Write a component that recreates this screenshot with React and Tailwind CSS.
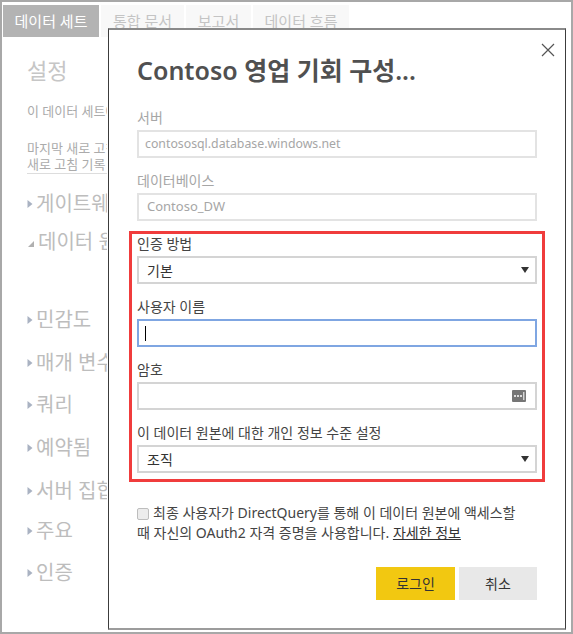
import React from "react";

function Tri() {
  return (
    <svg width="6" height="10" viewBox="0 0 6 10" className="mr-[3px] shrink-0">
      <polygon points="0.5,1 5.5,5 0.5,9" fill="#a9b2c2" />
    </svg>
  );
}

function TriDown() {
  return (
    <svg width="8" height="8" viewBox="0 0 8 8" className="mr-[3px] shrink-0 mt-[4px]">
      <polygon points="7,1 7,7 1,7" fill="#b0b0b0" />
    </svg>
  );
}

function NavItem({ children, mt, open }) {
  return (
    <div className={`flex items-center whitespace-nowrap text-[20px] leading-[24px] text-[#bdbdbd] ${mt}`}>
      {open ? <TriDown /> : <Tri />}
      <span>{children}</span>
    </div>
  );
}

function Caret() {
  return (
    <svg width="8" height="6" viewBox="0 0 8 6" className="shrink-0">
      <polygon points="0,0 8,0 4,6" fill="#333" />
    </svg>
  );
}

export default function App() {
  return (
    <div className="relative w-[573px] h-[634px] overflow-hidden border-2 border-[#a8a8a8] bg-white font-['Noto_Sans','Noto_Sans_CJK_KR',sans-serif]">
      {/* Tabs */}
      <div className="flex gap-[2px] pl-[1px] pt-[3px]">
        <div className="w-[96px] h-[32px] flex items-center justify-center bg-[#b3b3b3] text-white text-[15px]">데이터 세트</div>
        <div className="w-[83px] h-[32px] flex items-center justify-center bg-[#f8f8f8] text-[#c4c4c4] text-[15px]">통합 문서</div>
        <div className="w-[65px] h-[32px] flex items-center justify-center bg-[#f8f8f8] text-[#c4c4c4] text-[15px]">보고서</div>
        <div className="w-[96px] h-[32px] flex items-center justify-center bg-[#f8f8f8] text-[#c4c4c4] text-[15px]">데이터 흐름</div>
      </div>

      {/* Left settings panel (behind dialog) */}
      <div className="w-[105px] overflow-hidden pl-[25px] flex flex-col">
        <div className="mt-[18px] text-[22px] leading-[30px] text-[#c6c6c6]">설정</div>
        <div className="mt-[17px] text-[13px] leading-[18px] text-[#ababab] whitespace-nowrap">이 데이터 세트에 대한 설정</div>
        <div className="mt-[20px] w-[120px] text-[13px] leading-[16px] text-[#ababab] whitespace-nowrap border-b border-[#dddddd] pb-[1px]">
          <div>마지막 새로 고침 성공</div>
          <div>새로 고침 기록</div>
        </div>
        <NavItem mt="mt-[18px]">게이트웨이 연결</NavItem>
        <NavItem mt="mt-[14px]" open>데이터 원본 자격 증명</NavItem>
        <NavItem mt="mt-[54px]">민감도</NavItem>
        <NavItem mt="mt-[19px]">매개 변수</NavItem>
        <NavItem mt="mt-[18px]">쿼리</NavItem>
        <NavItem mt="mt-[19px]">예약됨</NavItem>
        <NavItem mt="mt-[19px]">서버 집합</NavItem>
        <NavItem mt="mt-[16px]">주요</NavItem>
        <NavItem mt="mt-[18px]">인증</NavItem>
      </div>

      {/* Dialog */}
      <div className="absolute left-[106px] top-[26px] w-[458px] h-[602px] bg-white border-l border-r border-[#3c3c3c] border-t-2 border-t-[#8a8a8a] border-b-2 border-b-[#9c9c9c] px-[28px] pt-[25px]">
        <button className="absolute right-[10px] top-[13px]">
          <svg width="14" height="14" viewBox="0 0 14 14">
            <path d="M1 1 L13 13 M13 1 L1 13" stroke="#555" strokeWidth="1.2" fill="none" />
          </svg>
        </button>

        <div className="text-[25px] leading-[30px] font-semibold text-[#505050] whitespace-nowrap">Contoso 영업 기회 구성...</div>

        <div className="mt-[23px] text-[14px] leading-[20px] text-[#a6a6a6]">서버</div>
        <div className="mt-[2px] h-[28px] border-2 border-[#e3e3e3] px-[6px] flex items-center text-[12.3px] text-[#a6a6a6]">contososql.database.windows.net</div>

        <div className="mt-[13px] text-[14px] leading-[20px] text-[#a6a6a6]">데이터베이스</div>
        <div className="mt-[2px] h-[28px] border-2 border-[#e3e3e3] px-[8px] flex items-center text-[13px] text-[#a6a6a6]">Contoso_DW</div>

        <div className="mt-[10px] mx-[-8px] border-[3px] border-[#f03c3c] px-[5px] pb-[6px]">
          <div className="text-[14px] leading-[20px] text-[#444]">인증 방법</div>
          <div className="mt-[2px] h-[28px] border-2 border-[#d4d4d4] pl-[8px] pr-[6px] flex items-center justify-between text-[14px] text-[#333]">
            <span>기본</span>
            <Caret />
          </div>

          <div className="mt-[13px] text-[14px] leading-[20px] text-[#444]">사용자 이름</div>
          <div className="mt-[2px] h-[28px] border-2 border-[#7fa6e2] px-[6px] flex items-center">
            <div className="w-[1px] h-[15px] bg-black" />
          </div>

          <div className="mt-[13px] text-[14px] leading-[20px] text-[#444]">암호</div>
          <div className="mt-[2px] h-[28px] border-2 border-[#d4d4d4] pr-[9px] flex items-center justify-end">
            <svg width="14" height="12" viewBox="0 0 14 12">
              <rect x="0" y="0" width="14" height="12" rx="1" fill="#767676" />
              <circle cx="3" cy="6" r="1" fill="#fff" />
              <circle cx="6" cy="6" r="1" fill="#fff" />
              <circle cx="9" cy="6" r="1" fill="#fff" />
              <rect x="11.3" y="2" width="1" height="8" fill="#fff" />
            </svg>
          </div>

          <div className="mt-[13px] text-[14px] leading-[20px] text-[#444] whitespace-nowrap">이 데이터 원본에 대한 개인 정보 수준 설정</div>
          <div className="mt-[2px] h-[28px] border-2 border-[#d4d4d4] pl-[8px] pr-[6px] flex items-center justify-between text-[14px] text-[#333]">
            <span>조직</span>
            <Caret />
          </div>
        </div>

        <div className="mt-[21px] text-[14px] leading-[20px] text-[#444] whitespace-nowrap">
          <span className="inline-block align-[-2px] w-[12px] h-[12px] border border-[#bdbdbd] bg-[#ececec] rounded-[2px] mr-[4px]" />
          최종 사용자가 DirectQuery를 통해 이 데이터 원본에 액세스할
          <br />
          때 자신의 OAuth2 자격 증명을 사용합니다. <span className="underline text-[#333]">자세한 정보</span>
        </div>

        <div className="mt-[24px] flex justify-end gap-[4px]">
          <button className="w-[79px] h-[33px] bg-[#f2c811] text-[14px] text-[#333]">로그인</button>
          <button className="w-[78px] h-[33px] bg-[#e8e8e8] text-[14px] text-[#333]">취소</button>
        </div>
      </div>
    </div>
  );
}
